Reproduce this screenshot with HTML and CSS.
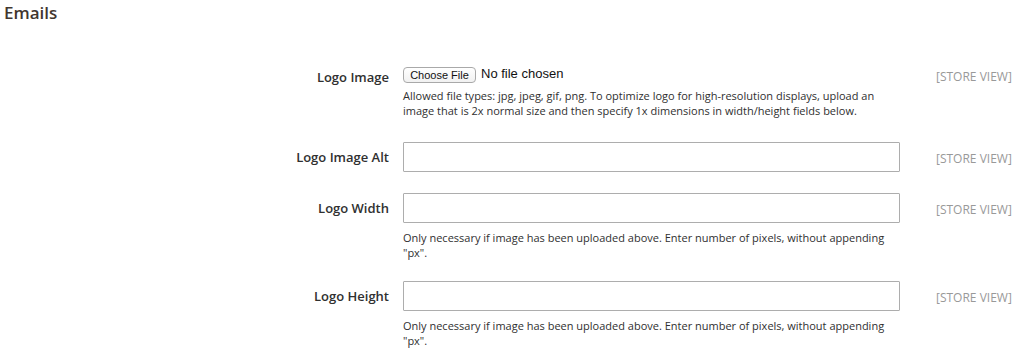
FILE: index.html
```html
<!DOCTYPE html>
<html lang="en">
<head>
  <meta charset="UTF-8">
  <title>Emails</title>
  <link rel="stylesheet" href="styles.css">
</head>

<body>

  <!-- Emails config section -->
  <div class="section">
    <h2 class="section-title">Emails</h2>

    <div class="config-form">

      <div class="config-row row-file">
        <label class="config-label">Logo Image</label>
        <div class="config-field">
          <div class="file-control">
            <span class="file-button">Choose File</span>
            <span class="file-status">No file chosen</span>
          </div>
          <div class="config-note note-file">
            Allowed file types: jpg, jpeg, gif, png. To optimize logo for high-resolution displays, upload an image that is 2x normal size and then specify 1x dimensions in width/height fields below.
          </div>
        </div>
        <div class="config-scope scope-file">[STORE VIEW]</div>
      </div>

      <div class="config-row">
        <label class="config-label label-input">Logo Image Alt</label>
        <div class="config-field">
          <input class="text-input" type="text">
        </div>
        <div class="config-scope">[STORE VIEW]</div>
      </div>

      <div class="config-row">
        <label class="config-label label-input">Logo Width</label>
        <div class="config-field">
          <input class="text-input" type="text">
          <div class="config-note">
            Only necessary if image has been uploaded above. Enter number of pixels, without appending "px".
          </div>
        </div>
        <div class="config-scope">[STORE VIEW]</div>
      </div>

      <div class="config-row">
        <label class="config-label label-input">Logo Height</label>
        <div class="config-field">
          <input class="text-input" type="text">
          <div class="config-note">
            Only necessary if image has been uploaded above. Enter number of pixels, without appending "px".
          </div>
        </div>
        <div class="config-scope">[STORE VIEW]</div>
      </div>

    </div>
  </div>

</body>
</html>
```

FILE: styles.css
```css
:root {
  --text-dark: #303030;
  --title-color: #41362f;
  --scope-gray: #999999;
  --input-border: #adadad;
}

html, body {
  margin: 0;
  padding: 0;
  background-color: #ffffff;
  font-family: 'Open Sans', sans-serif;
  color: var(--text-dark);
}

.section {
  padding: 3px 0 0 4px;
}

.section-title {
  margin: 0;
  font-size: 17px;
  font-weight: 600;
  line-height: 20px;
  color: var(--title-color);
}

.config-form {
  margin-top: 43px;
  display: flex;
  flex-direction: column;
  gap: 21px;
}

.config-row {
  display: grid;
  grid-template-columns: 385px 497px 88px;
  column-gap: 14px;
}

.row-file {
  padding-bottom: 3px;
}

.config-row .config-scope {
  margin-left: 22px;
}

.config-label {
  text-align: right;
  font-size: 13px;
  font-weight: 600;
  line-height: 18px;
  padding-top: 2px;
}

.label-input {
  padding-top: 6px;
}

.config-field {
  display: flex;
  flex-direction: column;
}

/* fake file picker */
.file-control {
  display: flex;
  align-items: center;
  gap: 5px;
  height: 18px;
}

.file-button {
  box-sizing: border-box;
  width: 73px;
  height: 16px;
  border: 1px solid #a9a9a9;
  border-radius: 4px;
  background: linear-gradient(#ffffff, #f1f1f1);
  font-family: 'Liberation Sans', Arial, sans-serif;
  font-size: 11px;
  line-height: 14px;
  text-align: center;
  color: #111;
}

.file-status {
  font-family: 'Liberation Sans', Arial, sans-serif;
  font-size: 13px;
  color: #111;
  position: relative;
  top: -2px;
}

.text-input {
  box-sizing: border-box;
  width: 497px;
  height: 30px;
  margin: 0;
  border: 1px solid var(--input-border);
  border-radius: 1px;
  background: #ffffff;
  font-family: 'Open Sans', sans-serif;
  font-size: 13px;
}

.config-note {
  margin-top: 7px;
  font-size: 11px;
  line-height: 15px;
  color: var(--text-dark);
}

.note-file {
  margin-top: 4px;
}

.config-scope {
  font-size: 12px;
  line-height: 18px;
  color: var(--scope-gray);
  padding-top: 8px;
  white-space: nowrap;
}

.scope-file {
  padding-top: 2px;
}
```
